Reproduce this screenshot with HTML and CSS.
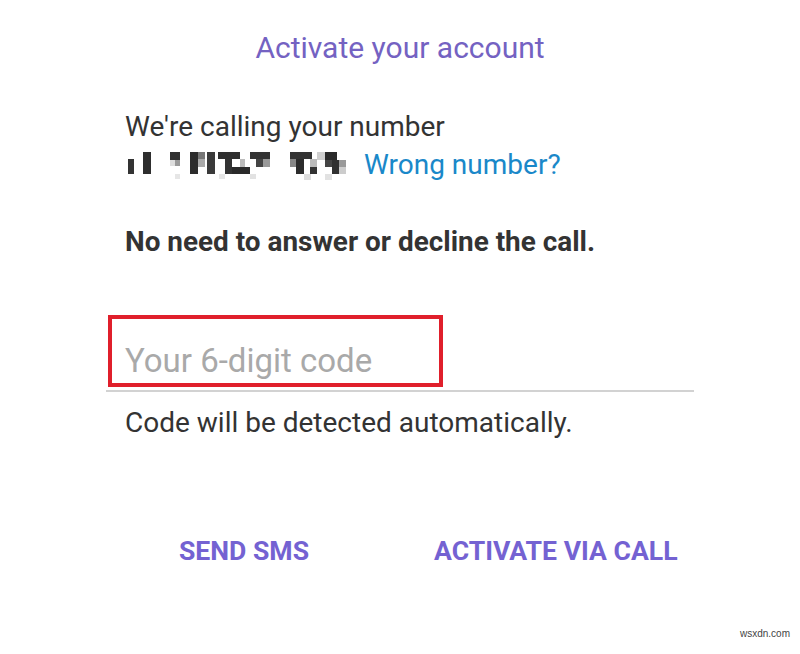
FILE: index.html
```html
<!DOCTYPE html>
<html lang="en">
<head>
    <meta charset="UTF-8">
    <meta name="viewport" content="width=device-width, initial-scale=1.0">
    <title>Activate your account</title>
    <link rel="stylesheet" href="styles.css">
</head>
<body>
    <div class="dialog">
        <h1 class="title">Activate your account</h1>

        <div class="calling">
            <p class="line">We're calling your number</p>
            <p class="line number-row">
                <svg class="masked" width="232" height="32" viewBox="0 0 232 32" aria-hidden="true">
                    <rect x="5" y="10" width="6" height="15" fill="#333"/>
                    <rect x="20" y="3" width="8" height="22" fill="#2e2e2e"/>
                    <rect x="47" y="3" width="10" height="8" fill="#303030"/>
                    <rect x="52" y="11" width="5" height="6" fill="#999"/>
                    <rect x="47" y="11" width="5" height="6" fill="#ddd"/>
                    <rect x="52" y="25" width="5" height="5" fill="#e6e6e6"/>
                    <rect x="67" y="3" width="8" height="22" fill="#2c2c2c"/>
                    <rect x="75" y="3" width="7" height="7" fill="#777"/>
                    <rect x="75" y="10" width="7" height="8" fill="#aaa"/>
                    <rect x="84" y="3" width="8" height="22" fill="#3a3a3a"/>
                    <rect x="95" y="3" width="22" height="7" fill="#2f2f2f"/>
                    <rect x="102" y="10" width="7" height="15" fill="#333"/>
                    <rect x="109" y="18" width="18" height="7" fill="#2a2a2a"/>
                    <rect x="117" y="10" width="5" height="8" fill="#bbb"/>
                    <rect x="127" y="3" width="20" height="7" fill="#333"/>
                    <rect x="133" y="10" width="7" height="8" fill="#444"/>
                    <rect x="140" y="10" width="7" height="8" fill="#999"/>
                    <rect x="96" y="25" width="6" height="5" fill="#e6e6e6"/>
                    <rect x="127" y="25" width="6" height="5" fill="#e2e2e2"/>
                    <rect x="167" y="3" width="22" height="7" fill="#333"/>
                    <rect x="173" y="10" width="8" height="15" fill="#2c2c2c"/>
                    <rect x="167" y="10" width="6" height="8" fill="#888"/>
                    <rect x="187" y="10" width="7" height="8" fill="#bbb"/>
                    <rect x="187" y="18" width="7" height="7" fill="#333"/>
                    <rect x="194" y="3" width="8" height="8" fill="#cfcfcf"/>
                    <rect x="202" y="3" width="12" height="8" fill="#2a2a2a"/>
                    <rect x="202" y="11" width="7" height="7" fill="#444"/>
                    <rect x="209" y="11" width="7" height="14" fill="#303030"/>
                    <rect x="216" y="11" width="7" height="7" fill="#999"/>
                    <rect x="216" y="18" width="7" height="7" fill="#ccc"/>
                    <rect x="181" y="25" width="7" height="6" fill="#ddd"/>
                    <rect x="202" y="25" width="7" height="6" fill="#e2e2e2"/>
                </svg>
                <a href="#" class="wrong">Wrong number?</a>
            </p>
        </div>

        <p class="notice">No need to answer or decline the call.</p>

        <div class="field">
            <span class="placeholder">Your 6-digit code</span>
            <div class="highlight"></div>
        </div>
        <p class="hint">Code will be detected automatically.</p>

        <div class="actions">
            <a href="#" class="action">SEND SMS</a>
            <a href="#" class="action">ACTIVATE VIA CALL</a>
        </div>
    </div>

    <div class="watermark">wsxdn.com</div>
</body>
</html>
```

FILE: styles.css
```css
body {
    margin: 0;
    min-height: 654px;
    background: #fff;
    font-family: Roboto, "Noto Sans", Arial, sans-serif;
    color: #333;
    position: relative;
}

.dialog {
    width: 588px;
    margin: 0 auto;
    padding-top: 30px;
}

/* Header */
.title {
    margin: 0;
    font-size: 30px;
    font-weight: 400;
    line-height: 36px;
    text-align: center;
    color: #7462c2;
}

/* Calling block */
.calling {
    margin-top: 42px;
    padding: 0 19px;
}

.line {
    margin: 0;
    font-size: 28px;
    line-height: 38px;
}

.number-row {
    display: flex;
    align-items: center;
}

.masked {
    display: block;
    margin: 0 9px 0 -2px;
}

.wrong {
    color: #1a88c9;
    text-decoration: none;
}

.notice {
    margin: 43px 0 0;
    padding: 0 19px;
    font-size: 27.9px;
    font-weight: 700;
    line-height: 30px;
}

/* Code input */
.field {
    position: relative;
    height: 75px;
    margin-top: 58px;
    padding: 0 19px;
    display: flex;
    align-items: flex-end;
    border-bottom: 2px solid #d2d2d2;
}

.placeholder {
    font-size: 33px;
    line-height: 40px;
    margin-bottom: 9px;
    color: #a9a9a9;
}

.highlight {
    position: absolute;
    left: 2px;
    top: 0;
    width: 335px;
    height: 72px;
    border: 4px solid #e01f2b;
    box-sizing: border-box;
}

.hint {
    margin: 12px 0 0;
    padding: 0 19px;
    font-size: 28px;
    line-height: 38px;
}

/* Buttons */
.actions {
    display: flex;
    gap: 125px;
    margin-top: 94px;
    padding-left: 73px;
}

.action {
    font-size: 26.6px;
    font-weight: 700;
    line-height: 30px;
    color: #7462d2;
    text-decoration: none;
}

.watermark {
    position: absolute;
    right: 10px;
    bottom: 15px;
    font-family: Arial, "Liberation Sans", sans-serif;
    font-size: 10px;
    color: #444;
}
```
